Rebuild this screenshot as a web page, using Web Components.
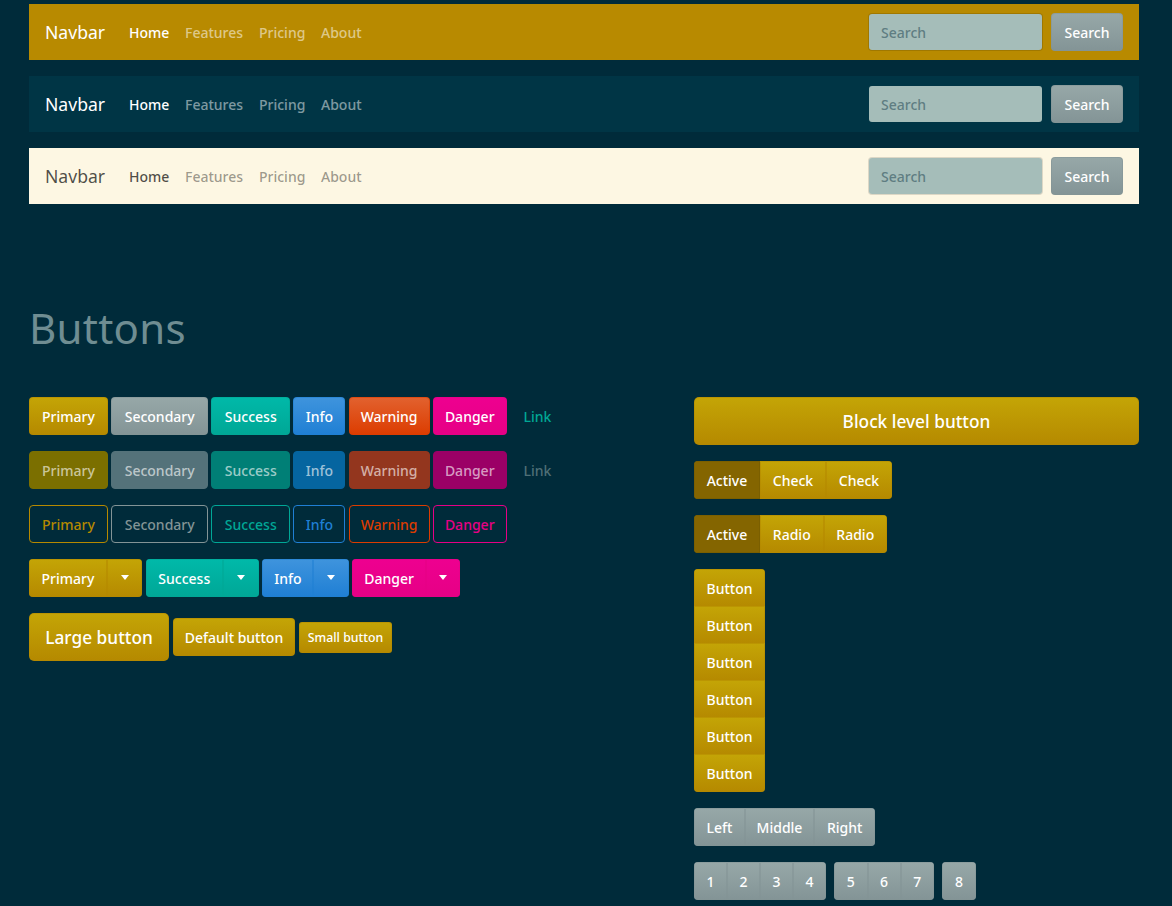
<!DOCTYPE html>
<html lang="en"><head><meta charset="utf-8"><title>Buttons</title>
<style>
html,body{margin:0;height:906px;overflow:hidden;background:#002b3a;}
body{font-family:"Noto Sans","Liberation Sans",sans-serif;font-size:14px;font-weight:500;color:#839496;}
</style></head><body>
<x-page>
  <x-navbar theme="gold"></x-navbar>
  <x-navbar theme="dark"></x-navbar>
  <x-navbar theme="light"></x-navbar>
  <x-heading>Buttons</x-heading>
  <x-columns>
    <x-stack slot="left">
      <x-row>
        <x-btn v="primary" w="79">Primary</x-btn><x-btn v="secondary" w="97">Secondary</x-btn><x-btn v="success" w="78.8">Success</x-btn><x-btn v="info" w="52">Info</x-btn><x-btn v="warning" w="81">Warning</x-btn><x-btn v="danger" w="74">Danger</x-btn><x-btn v="link" w="55">Link</x-btn>
      </x-row>
      <x-row>
        <x-btn v="primary" k="disabled" w="79">Primary</x-btn><x-btn v="secondary" k="disabled" w="97">Secondary</x-btn><x-btn v="success" k="disabled" w="78.8">Success</x-btn><x-btn v="info" k="disabled" w="52">Info</x-btn><x-btn v="warning" k="disabled" w="81">Warning</x-btn><x-btn v="danger" k="disabled" w="74">Danger</x-btn><x-btn v="link" k="disabled" w="55">Link</x-btn>
      </x-row>
      <x-row>
        <x-btn v="primary" k="outline" w="79">Primary</x-btn><x-btn v="secondary" k="outline" w="97">Secondary</x-btn><x-btn v="success" k="outline" w="78.8">Success</x-btn><x-btn v="info" k="outline" w="52">Info</x-btn><x-btn v="warning" k="outline" w="81">Warning</x-btn><x-btn v="danger" k="outline" w="74">Danger</x-btn>
      </x-row>
      <x-row split>
        <x-split v="primary" a="78" b="35.4">Primary</x-split><x-split v="success" a="77" b="36.2">Success</x-split><x-split v="info" a="51" b="35.4">Info</x-split><x-split v="danger" a="74" b="34">Danger</x-split>
      </x-row>
      <x-row sizes>
        <x-btn v="primary" s="lg" w="140">Large button</x-btn><x-btn v="primary" w="122">Default button</x-btn><x-btn v="primary" s="sm" w="93">Small button</x-btn>
      </x-row>
    </x-stack>
    <x-stack slot="right">
      <x-btn v="primary" s="lg" block>Block level button</x-btn>
      <x-group><x-btn v="primary" k="active" w="66">Active</x-btn><x-btn v="primary" w="66">Check</x-btn><x-btn v="primary" w="66">Check</x-btn></x-group>
      <x-group><x-btn v="primary" k="active" w="66">Active</x-btn><x-btn v="primary" w="63.5">Radio</x-btn><x-btn v="primary" w="63.5">Radio</x-btn></x-group>
      <x-group vertical><x-btn v="primary" w="71">Button</x-btn><x-btn v="primary" w="71">Button</x-btn><x-btn v="primary" w="71">Button</x-btn><x-btn v="primary" w="71">Button</x-btn><x-btn v="primary" w="71">Button</x-btn><x-btn v="primary" w="71">Button</x-btn></x-group>
      <x-group><x-btn v="secondary" w="50.7">Left</x-btn><x-btn v="secondary" w="69.6">Middle</x-btn><x-btn v="secondary" w="60.7">Right</x-btn></x-group>
      <x-row wide>
        <x-group><x-btn v="secondary" w="33">1</x-btn><x-btn v="secondary" w="33">2</x-btn><x-btn v="secondary" w="33">3</x-btn><x-btn v="secondary" w="33">4</x-btn></x-group>
        <x-group><x-btn v="secondary" w="33.5">5</x-btn><x-btn v="secondary" w="33">6</x-btn><x-btn v="secondary" w="33.5">7</x-btn></x-group>
        <x-group><x-btn v="secondary" w="34">8</x-btn></x-group>
      </x-row>
    </x-stack>
  </x-columns>
</x-page>
<script>
const PAL={primary:['#c4a506','#b58900','#b58900','#7b6f00'],secondary:['#97a8a8','#839496','#839496','#54727a'],success:['#00b9a9','#00a796','#00a796','#007f76'],info:['#3f94dd','#1f7fd4','#1f7fd4','#0565a0'],warning:['#e2622f','#dc3c00','#dc3c00','#93361e'],danger:['#ee0090','#e60085','#e60085','#9b0066']};
function def(name,css,html,setup){
  customElements.define(name,class extends HTMLElement{
    connectedCallback(){
      if(this.shadowRoot)return;
      const r=this.attachShadow({mode:'open'});
      r.innerHTML='<style>'+css+'</style>'+(typeof html==='function'?html(this):html);
      if(setup)setup(this,r);
    }
  });
}
def('x-page',':host{display:block;width:1110px;padding:4px 0 0 29px;}','<slot></slot>');
def('x-heading',':host{display:block;margin:92px 0 37px;font-size:42px;line-height:64px;height:64px;color:#6f8d92;font-weight:400;letter-spacing:.25px;}','<slot></slot>');
def('x-columns',':host{display:grid;grid-template-columns:650px 445px;column-gap:15px;align-items:start;}','<div style="display:contents"><slot name="left"></slot><slot name="right"></slot></div>');
def('x-stack',':host{display:flex;flex-direction:column;align-items:flex-start;gap:16px;}','<slot></slot>');
def('x-row',':host{display:flex;gap:3.2px;align-items:center;}:host([split]){gap:3.4px;}:host([sizes]){gap:4px;}:host([wide]){gap:8px;}','<slot></slot>');
def('x-btn',`
:host{display:inline-flex;box-sizing:border-box;height:38px;align-items:center;justify-content:center;border:1px solid color-mix(in srgb,var(--b) 55%,transparent);background-origin:border-box;border-radius:var(--r,4px);background-image:linear-gradient(180deg,var(--t),var(--m));color:#fff;font-size:14px;white-space:nowrap;flex:none;}
:host([s=lg]){height:48px;font-size:17.3px;border-radius:var(--r,5px);}
:host([s=sm]){height:31px;font-size:12.3px;border-radius:var(--r,3px);}
:host([block]){display:flex;width:100%;}
:host([k=active]){background:#846500;border-color:#7b5f00;}
:host([k=disabled]){background:var(--d);border-color:var(--d);color:rgba(255,255,255,.62);}
:host([k=outline]){background:none;border-color:var(--b);color:var(--m);}
:host([v=link]){background:none;border-color:transparent;color:#00a796;}
:host([v=link][k=disabled]){color:#4f6f76;}
`,'<slot></slot>',(el)=>{
  const p=PAL[el.getAttribute('v')]||PAL.primary;
  el.style.setProperty('--t',p[0]);el.style.setProperty('--m',p[1]);el.style.setProperty('--b',p[2]);el.style.setProperty('--d',p[3]);
  if(el.hasAttribute('w'))el.style.width=el.getAttribute('w')+'px';
});
def('x-group',':host{display:inline-flex;--r:0;border-radius:4px;overflow:hidden;}:host([vertical]){flex-direction:column;}:host([vertical]) ::slotted(x-btn:not(:first-child)){margin-top:-1px;}','<slot></slot>');
def('x-caret',':host{display:block;width:0;height:0;border:solid transparent;border-width:5px 4.5px 0;border-top-color:#fff;margin-top:-1px;}','');
def('x-split',':host{display:inline-flex;border-radius:4px;overflow:hidden;--r:0;flex:none;}',
 (el)=>{const v=el.getAttribute('v');return `<x-btn v="${v}" w="${el.getAttribute('a')}"><slot></slot></x-btn><x-btn v="${v}" w="${el.getAttribute('b')}"><x-caret></x-caret></x-btn>`;});
def('x-nav-link',':host{display:block;padding:0 8px;color:var(--muted);white-space:nowrap;flex:none;box-sizing:content-box;}:host([active]){color:var(--act);}','<slot></slot>',
 (el)=>{el.style.width=el.getAttribute('w')+'px';});
def('x-navbar',`
:host{display:flex;align-items:center;box-sizing:border-box;height:56px;width:1110px;margin-bottom:16px;padding:0 16px;font-size:14px;}
:host([theme=gold]){background:#b88a00;--brand:#fff;--act:#fff;--muted:rgba(255,255,255,.55);}
:host([theme=dark]){background:#003545;--brand:#fff;--act:#fff;--muted:rgba(255,255,255,.5);}
:host([theme=light]){background:#fdf7e3;--brand:rgba(0,0,0,.7);--act:rgba(0,0,0,.7);--muted:rgba(0,0,0,.4);}
.brand{color:var(--brand);font-size:17.6px;font-weight:400;margin-right:16px;width:60px;white-space:nowrap;}
nav{display:flex;}
.sp{flex:1;}
.inp{box-sizing:border-box;width:175px;height:38px;margin-right:8px;padding:0 12px;display:flex;align-items:center;background:#a5bdb9;background-clip:padding-box;border:1px solid rgba(0,0,0,.13);border-radius:4px;color:#5f7d82;}
:host([theme=dark]) .inp{border-color:transparent;}
`,`<span class="brand">Navbar</span><nav><x-nav-link active w="40">Home</x-nav-link><x-nav-link w="58">Features</x-nav-link><x-nav-link w="46">Pricing</x-nav-link><x-nav-link w="41">About</x-nav-link></nav><span class="sp"></span><span class="inp">Search</span><x-btn v="secondary" w="72">Search</x-btn>`);
</script>
</body></html>
